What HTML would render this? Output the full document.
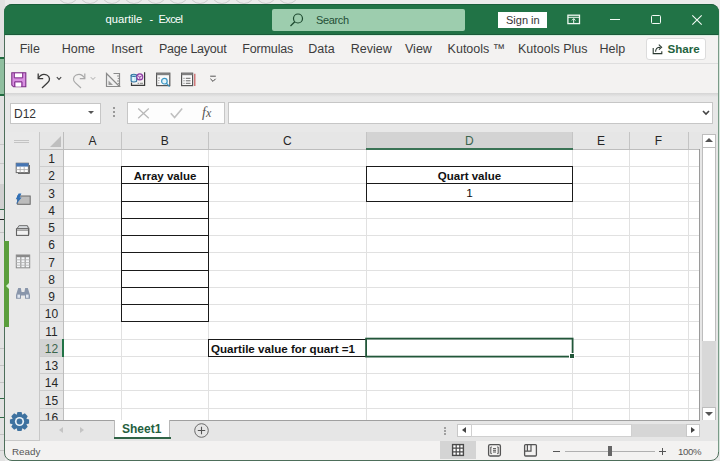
<!DOCTYPE html>
<html><head><meta charset="utf-8">
<style>
*{margin:0;padding:0;box-sizing:border-box}
html,body{width:720px;height:461px;overflow:hidden;background:#ebebeb;font-family:"Liberation Sans",sans-serif;position:relative;color:#262626}
.a{position:absolute}
.t{position:absolute;white-space:nowrap;line-height:1}
.gl{position:absolute;background:#dadada}
.hl{position:absolute;background:#c8c8c8}
.b{position:absolute;background:#1a1a1a}
.rn{position:absolute;left:40px;width:23px;text-align:center;font-size:12px;line-height:17px;color:#262626}
.cell{font-size:11.8px;color:#111}
.ch{position:absolute;top:132px;height:17px;text-align:center;font-size:12px;line-height:19px;color:#262626}
</style></head><body>

<svg class="a" style="left:0;top:0" width="720" height="4" viewBox="0 0 720 4"><circle cx="68" cy="-7" r="10.5" fill="none" stroke="#c4c4c4" stroke-width="0.8"/><circle cx="90" cy="-7" r="10.5" fill="none" stroke="#c4c4c4" stroke-width="0.8"/><circle cx="112" cy="-7" r="10.5" fill="none" stroke="#c4c4c4" stroke-width="0.8"/><circle cx="134" cy="-7" r="10.5" fill="none" stroke="#c4c4c4" stroke-width="0.8"/><circle cx="156" cy="-7" r="10.5" fill="none" stroke="#c4c4c4" stroke-width="0.8"/><circle cx="178" cy="-7" r="10.5" fill="none" stroke="#c4c4c4" stroke-width="0.8"/><circle cx="200" cy="-7" r="10.5" fill="none" stroke="#c4c4c4" stroke-width="0.8"/><circle cx="222" cy="-7" r="10.5" fill="none" stroke="#c4c4c4" stroke-width="0.8"/><circle cx="244" cy="-7" r="10.5" fill="none" stroke="#c4c4c4" stroke-width="0.8"/><circle cx="266" cy="-7" r="10.5" fill="none" stroke="#c4c4c4" stroke-width="0.8"/><circle cx="288" cy="-7" r="10.5" fill="none" stroke="#c4c4c4" stroke-width="0.8"/></svg>
<!-- background window strip on the left -->
<div class="a" style="left:0;top:0;width:5px;height:461px;background:#e2e2e2"></div>
<div class="a" style="left:0;top:57px;width:5px;height:39px;background:#8fbf9f;border-top:2px solid #1f6b3f;border-bottom:2px solid #1f6b3f"></div>

<div class="a" style="left:0;top:144px;width:5px;height:1px;background:#c8c8c8"></div>
<div class="a" style="left:0;top:163px;width:5px;height:1px;background:#c8c8c8"></div>
<div class="a" style="left:0;top:184px;width:5px;height:25px;background:#d0d0d0"></div>
<div class="a" style="left:0;top:209px;width:5px;height:1px;background:#2f6b45"></div>
<div class="a" style="left:0;top:219px;width:5px;height:1px;background:#222"></div>
<div class="a" style="left:0;top:232px;width:5px;height:1px;background:#c4c4c4"></div>
<div class="a" style="left:0;top:348px;width:5px;height:1px;background:#c4c4c4"></div>
<div class="a" style="left:0;top:365px;width:5px;height:1px;background:#c4c4c4"></div>
<div class="a" style="left:0;top:382px;width:5px;height:1px;background:#c4c4c4"></div>
<div class="a" style="left:0;top:398px;width:5px;height:1px;background:#2f6b45"></div>
<div class="a" style="left:0;top:417px;width:5px;height:1px;background:#2f6b45"></div>
<div class="a" style="left:0;top:434px;width:5px;height:1px;background:#c4c4c4"></div>
<div class="a" style="left:0;top:450px;width:5px;height:1px;background:#c4c4c4"></div>
<!-- window frame -->
<div class="a" style="left:4px;top:4px;width:715px;height:457px;border-radius:8px;background:#f3f2f1;border:1px solid #4d6e5a;overflow:hidden">
</div>

<div class="a" style="left:718px;top:30px;width:1px;height:422px;background:#7a9b88"></div>
<div class="a" style="left:719px;top:30px;width:1px;height:422px;background:#d9e7de"></div>
<!-- title bar -->
<div class="a" style="left:4px;top:4px;width:715px;height:31px;border-radius:8px 8px 0 0;background:#217346;border-top:1px solid #1a5e3a"></div>
<div class="a" style="left:5px;top:34px;width:713px;height:1px;background:#1b5a3a"></div>
<div class="a" style="left:5px;top:35px;width:713px;height:1px;background:#d8efe0"></div>
<div class="t" style="left:105.5px;top:14px;font-size:11.2px;color:#fff">quartile</div><div class="t" style="left:149.5px;top:14px;font-size:11px;color:#fff">-</div><div class="t" style="left:158.5px;top:14px;font-size:11px;letter-spacing:-0.6px;color:#fff">Excel</div>
<div class="a" style="left:272px;top:9px;width:193px;height:22px;background:#9dcdae;border-radius:2px"></div>
<svg class="a" style="left:288px;top:11px" width="18" height="18" viewBox="0 0 18 18"><circle cx="10" cy="7.5" r="4.5" fill="none" stroke="#1e4a30" stroke-width="1.2"/><path d="M6.8 10.7 L2.5 15" stroke="#1e4a30" stroke-width="1.3"/></svg>
<div class="t" style="left:316px;top:15px;font-size:11px;letter-spacing:-0.35px;color:#244f36">Search</div>
<div class="a" style="left:498px;top:12px;width:49px;height:16px;background:#fff"></div>
<div class="t" style="left:506px;top:15px;font-size:11px;color:#333">Sign in</div>
<!-- ribbon display icon -->
<svg class="a" style="left:566px;top:13px" width="16" height="13" viewBox="0 0 16 13"><rect x="1.9" y="2.2" width="11.6" height="8.4" fill="none" stroke="#eef8f1" stroke-width="1.3"/><path d="M2 4.3 H13.4" stroke="#eef8f1" stroke-width="1"/><path d="M7.7 10.5 V5.6 M5.9 7.4 L7.7 5.6 L9.5 7.4" fill="none" stroke="#eef8f1" stroke-width="1"/></svg>
<div class="a" style="left:610px;top:19px;width:10px;height:1px;background:#f4fbf6"></div>
<div class="a" style="left:651px;top:14.5px;width:10px;height:9.5px;border:1px solid #f4fbf6;border-radius:1.5px"></div>
<svg class="a" style="left:691px;top:14px" width="12" height="12" viewBox="0 0 12 12"><path d="M1.3 1.3 L10.7 10.7 M10.7 1.3 L1.3 10.7" stroke="#f4fbf6" stroke-width="1.1"/></svg>

<!-- menu bar -->
<div class="t" style="left:19.7px;top:43px;font-size:12.5px;color:#3c3c3c">File</div>
<div class="t" style="left:61.7px;top:43px;font-size:12.5px;color:#3c3c3c">Home</div>
<div class="t" style="left:111.3px;top:43px;font-size:12.5px;color:#3c3c3c">Insert</div>
<div class="t" style="left:159.0px;top:43px;font-size:12.5px;letter-spacing:-0.25px;color:#3c3c3c">Page Layout</div>
<div class="t" style="left:242.3px;top:43px;font-size:12.5px;letter-spacing:-0.15px;color:#3c3c3c">Formulas</div>
<div class="t" style="left:308.3px;top:43px;font-size:12.5px;color:#3c3c3c">Data</div>
<div class="t" style="left:350.7px;top:43px;font-size:12.5px;color:#3c3c3c">Review</div>
<div class="t" style="left:405.0px;top:43px;font-size:12.5px;color:#3c3c3c">View</div>
<div class="t" style="left:447.6px;top:43px;font-size:12.5px;color:#3c3c3c">Kutools ™</div>
<div class="t" style="left:518.0px;top:43px;font-size:12.5px;color:#3c3c3c">Kutools Plus</div>
<div class="t" style="left:599.6px;top:43px;font-size:12.5px;color:#3c3c3c">Help</div>
<div class="a" style="left:646px;top:38px;width:60px;height:22px;background:#fff;border:1px solid #dcdcdc;border-radius:3px"></div>
<svg class="a" style="left:652px;top:43px" width="12" height="12" viewBox="0 0 12 12"><path d="M1.2 5 V10.6 H9.8 V8.2" fill="none" stroke="#2b3a32" stroke-width="1.1"/><path d="M3.6 8.8 C3.6 5.6 5.6 4.2 8.2 4.2 M6.8 1.6 L9.6 4.2 L7 6.6" fill="none" stroke="#2b3a32" stroke-width="1.1"/></svg>
<div class="t" style="left:667.5px;top:43px;font-size:11.6px;font-weight:bold;color:#1f6340">Share</div>

<!-- QAT -->
<div class="a" style="left:5px;top:63px;width:713px;height:1px;background:#dedede"></div>
<div class="a" style="left:5px;top:93px;width:713px;height:39px;background:#e8e8e8"></div>
<div class="a" style="left:5px;top:93px;width:713px;height:4px;background:linear-gradient(#d4d4d4,#e8e8e8)"></div>

<!-- QAT icons -->
<svg class="a" style="left:10px;top:71px" width="18" height="18" viewBox="0 0 18 18">
<path d="M1.8 1.8 H15.8 V15.8 H3.5 L1.8 14.1 Z" fill="#d98fe2" stroke="#7b2e85" stroke-width="1.1"/>
<rect x="4.6" y="2.6" width="7.8" height="3.9" fill="#fff"/>
<path d="M4.3 1.8 V6.9 H12.7 V1.8" fill="none" stroke="#7b2e85" stroke-width="1"/>
<rect x="5.5" y="11.4" width="5.6" height="4.2" fill="#fff"/>
<path d="M4.7 15.8 V10.8 H12 V15.8" fill="none" stroke="#7b2e85" stroke-width="1"/>
</svg>
<svg class="a" style="left:35px;top:71px" width="18" height="18" viewBox="0 0 18 18">
<path d="M3.2 7.3 C5.5 3.6 9 2.8 11.8 4 C15.2 5.6 15.2 9.6 12.8 11.6 L7 17" fill="none" stroke="#3a3a3a" stroke-width="1.3"/>
<path d="M3.2 2.5 V7.6 H8.2" fill="none" stroke="#3a3a3a" stroke-width="1.3"/>
</svg>
<svg class="a" style="left:55px;top:75px" width="8" height="7" viewBox="0 0 8 7"><path d="M1.8 2.2 L4 4.5 L6.2 2.2" fill="none" stroke="#444" stroke-width="1.1"/></svg>
<svg class="a" style="left:70px;top:71px" width="18" height="18" viewBox="0 0 18 18">
<path d="M14.8 7.3 C12.5 3.6 9 2.8 6.2 4 C2.8 5.6 2.8 9.6 5.2 11.6 L11 17" fill="none" stroke="#a8a8a8" stroke-width="1.2"/>
<path d="M14.8 2.5 V7.6 H9.8" fill="none" stroke="#a8a8a8" stroke-width="1.2"/>
</svg>
<svg class="a" style="left:89px;top:75px" width="8" height="7" viewBox="0 0 8 7"><path d="M1.8 2.2 L4 4.5 L6.2 2.2" fill="none" stroke="#aaa" stroke-width="1"/></svg>
<svg class="a" style="left:104px;top:71px" width="18" height="18" viewBox="0 0 18 18">
<path d="M2.5 2.5 L15.5 15.5 H2.5 Z" fill="#f0f0f0" stroke="#8a8a8a" stroke-width="1.2"/>
<path d="M4.5 9.5 L9 14 H4.5 Z" fill="#9a9a9a"/>
<path d="M9.5 2.5 H15.5 V15.5" fill="none" stroke="#8a8a8a" stroke-width="1.2"/>
<path d="M13 5 H15.5 M13.8 7.5 H15.5 M13 10 H15.5 M13.8 12.5 H15.5" stroke="#8a8a8a" stroke-width="0.9"/>
</svg>
<svg class="a" style="left:129px;top:71px" width="18" height="18" viewBox="0 0 18 18">
<path d="M2.5 11.6 V14.4 H15.6 V1.3" fill="none" stroke="#3a3a3a" stroke-width="1.2"/>
<path d="M8.6 12.3 H10 M10.8 12.3 H14" stroke="#777" stroke-width="0.9"/>
<path d="M2.1 4.3 V9.8 C2.1 11.3 7.7 11.3 7.7 9.8 V4.3" fill="#c9ecf7" stroke="#2b6f9e" stroke-width="1.1"/>
<ellipse cx="4.9" cy="4.3" rx="2.8" ry="1.1" fill="#c9ecf7" stroke="#2b6f9e" stroke-width="1.1"/>
<path d="M4.2 6 V9.5" stroke="#ffffff" stroke-width="0.9"/>
<circle cx="10.8" cy="5.9" r="3" fill="#f1ddf3" stroke="#8d3aa3" stroke-width="1.1"/>
<path d="M8.6 4.7 L10.8 6 L13 4.7 M10.8 6 V8.6" fill="none" stroke="#8d3aa3" stroke-width="0.9"/>
</svg>
<svg class="a" style="left:154px;top:71px" width="18" height="18" viewBox="0 0 18 18">
<rect x="2.6" y="2.2" width="13.2" height="12.4" fill="#fafafa" stroke="#555" stroke-width="1.2"/>
<rect x="2.6" y="2.2" width="13.2" height="2" fill="#808080"/>
<path d="M4.3 7 H6 M4.3 9.5 H5.3 M4.3 12 H5.3" stroke="#777" stroke-width="0.8"/>
<circle cx="10.4" cy="10.2" r="2.8" fill="#e3f4fa" stroke="#3a96c4" stroke-width="1.2"/>
<path d="M12.4 12.3 L15.6 15.6" stroke="#3a96c4" stroke-width="1.3"/>
</svg>
<svg class="a" style="left:179px;top:71px" width="18" height="18" viewBox="0 0 18 18">
<rect x="2.6" y="2.2" width="11" height="12.4" fill="#fafafa" stroke="#555" stroke-width="1.2"/>
<rect x="2.6" y="2.2" width="11" height="2" fill="#808080"/>
<path d="M4.5 7.3 H5.5 M6.8 7.3 H11.5 M4.5 9.8 H5.5 M6.8 9.8 H11.5 M4.5 12.3 H5.5 M6.8 12.3 H11.5" stroke="#666" stroke-width="1"/>
<path d="M15.8 2.8 V15" stroke="#c85a5e" stroke-width="1.2"/>
</svg>
<svg class="a" style="left:207px;top:73px" width="12" height="12" viewBox="0 0 12 12"><path d="M3.2 3.2 H8.8" stroke="#444" stroke-width="0.9"/><path d="M3.4 5.8 L6 8.4 L8.6 5.8" fill="none" stroke="#444" stroke-width="1"/></svg>

<!-- formula bar -->
<div class="a" style="left:10px;top:103px;width:91px;height:21px;background:#fff;border:1px solid #c6c6c6"></div>
<div class="t" style="left:14px;top:108px;font-size:12px;color:#333">D12</div>
<div class="a" style="left:88px;top:111px;width:0;height:0;border-left:3px solid transparent;border-right:3px solid transparent;border-top:3px solid #555"></div>
<div class="a" style="left:113px;top:107px;width:2px;height:2px;background:#999"></div>
<div class="a" style="left:113px;top:111px;width:2px;height:2px;background:#999"></div>
<div class="a" style="left:113px;top:115px;width:2px;height:2px;background:#999"></div>
<div class="a" style="left:127px;top:102px;width:98px;height:22px;background:#fdfdfd;border:1px solid #c6c6c6"></div>
<svg class="a" style="left:136px;top:106px" width="15" height="15" viewBox="0 0 15 15"><path d="M2.2 2.6 L12.8 12.2 M12.8 2.6 L2.2 12.2" stroke="#b8b8b8" stroke-width="1.3"/></svg>
<svg class="a" style="left:169px;top:106px" width="15" height="15" viewBox="0 0 15 15"><path d="M1.8 7.2 L5.6 11.6 L13.2 2.6" fill="none" stroke="#c0c0c0" stroke-width="1.6"/></svg>
<div class="t" style="left:202px;top:106px;font-family:'Liberation Serif',serif;font-style:italic;font-size:14px;color:#555">f<span style="font-size:12px">x</span></div>
<div class="a" style="left:228px;top:102px;width:485px;height:22px;background:#fff;border:1px solid #c6c6c6"></div>

<svg class="a" style="left:701px;top:108px" width="10" height="9" viewBox="0 0 10 9"><path d="M2 3 L5 6 L8 3" fill="none" stroke="#444" stroke-width="1.6"/></svg>
<!-- left pane -->
<div class="a" style="left:5px;top:132px;width:35px;height:309px;background:#e9e9e9;border-bottom:1px solid #c8c8c8"></div>
<div class="a" style="left:39px;top:132px;width:1px;height:309px;background:#c8c8c8"></div>

<!-- left pane icons -->
<div class="a" style="left:14px;top:140px;width:15px;height:1px;background:#c4c4c4"></div>
<div class="a" style="left:14px;top:142px;width:15px;height:1px;background:#c4c4c4"></div>
<svg class="a" style="left:15px;top:162px" width="16" height="13" viewBox="0 0 16 13">
<path d="M3 11.5 H14.5 V3" fill="none" stroke="#6b6b6b" stroke-width="1"/>
<rect x="1.2" y="1.2" width="12.2" height="9.4" fill="#fff" stroke="#6b6b6b" stroke-width="1"/>
<rect x="1.2" y="1.2" width="12.2" height="3.4" fill="#4676b4"/>
<path d="M1.2 7.6 H13.4 M5.2 4.6 V10.6 M9.2 4.6 V10.6" stroke="#a8a8a8" stroke-width="0.8"/>
</svg>
<svg class="a" style="left:14px;top:193px" width="18" height="13" viewBox="0 0 18 13">
<rect x="3.6" y="3" width="12.6" height="8.3" fill="#bcbcbc" stroke="#6a6a6a" stroke-width="1"/>
<path d="M4.6 0.6 H7.4 L5.6 4.4 H7.6 L2 11.6 L3.8 6.2 H1.8 Z" fill="#2f6fb6"/>
</svg>
<svg class="a" style="left:15px;top:223px" width="17" height="14" viewBox="0 0 17 14">
<path d="M4 2.3 H12.5 L14.6 5.2 V11.2 L13.6 12.6 V7 L12.2 5.6 H1.6 Z" fill="#9a9a9a"/>
<path d="M4.2 2.6 H12.2 L13.6 5.6 H2 Z" fill="#d6d9dc" stroke="#707070" stroke-width="0.9"/>
<rect x="1.5" y="5.8" width="12" height="6.6" fill="#f2f2f2" stroke="#626262" stroke-width="1.1"/>
<path d="M2 7.4 H13" stroke="#9a9a9a" stroke-width="1"/>
</svg>
<svg class="a" style="left:15px;top:254px" width="16" height="15" viewBox="0 0 16 15">
<rect x="1.3" y="1" width="13.4" height="12.8" fill="#f4f6f8" stroke="#8a8a8a" stroke-width="1"/>
<rect x="1.3" y="1" width="13.4" height="2.2" fill="#8a8a8a"/>
<path d="M5.8 3 V13.8 M10.2 3 V13.8" stroke="#9a9a9a" stroke-width="1.2"/>
<path d="M1.3 5.8 H14.7 M1.3 8.6 H14.7 M1.3 11.2 H14.7" stroke="#b4b4b4" stroke-width="0.9"/>
</svg>
<svg class="a" style="left:15px;top:287px" width="16" height="13" viewBox="0 0 16 13">
<path d="M3.2 1 H5.8 L6.6 5 H9.4 L10.2 1 H12.8 L15 8 V11.8 H10 V8.6 H6 V11.8 H1 V8 Z" fill="#8996ab"/>
<rect x="2.4" y="7.6" width="2.6" height="3.2" fill="#dfe6f0"/>
<rect x="11" y="7.6" width="2.6" height="3.2" fill="#dfe6f0"/>
</svg>
<svg class="a" style="left:9px;top:411px" width="21" height="21" viewBox="0 0 21 21">
<path d="M17.34 7.69 L20.08 8.46 L20.08 12.54 L17.34 13.31 L17.33 13.35 L18.72 15.83 L15.83 18.72 L13.35 17.33 L13.31 17.34 L12.54 20.08 L8.46 20.08 L7.69 17.34 L7.65 17.33 L5.17 18.72 L2.28 15.83 L3.67 13.35 L3.66 13.31 L0.92 12.54 L0.92 8.46 L3.66 7.69 L3.67 7.65 L2.28 5.17 L5.17 2.28 L7.65 3.67 L7.69 3.66 L8.46 0.92 L12.54 0.92 L13.31 3.66 L13.35 3.67 L15.83 2.28 L18.72 5.17 L17.33 7.65 Z" fill="#3e72a0"/>
<circle cx="10.5" cy="10.5" r="4.6" fill="#e9f1f7"/>
<circle cx="10.5" cy="10.5" r="2.9" fill="#3e72a0"/>
</svg>
<!-- green side bar -->
<div class="a" style="left:4px;top:241px;width:5px;height:86px;background:#5a9e3c"></div>
<div class="a" style="left:6px;top:283px;width:0;height:0;border-top:3px solid transparent;border-bottom:3px solid transparent;border-right:3px solid #d8f0d0"></div>

<!-- grid -->
<div class="a" style="left:40px;top:132px;width:660px;height:17px;background:#e6e6e6"></div>
<div class="a" style="left:40px;top:149px;width:24px;height:272px;background:#e6e6e6"></div>
<div class="a" style="left:64px;top:149px;width:636px;height:272px;background:#fff"></div>

<div class="a" style="left:64px;top:166px;width:636px;height:1px;background:#e1e1e1"></div>
<div class="a" style="left:64px;top:183px;width:636px;height:1px;background:#e1e1e1"></div>
<div class="a" style="left:64px;top:201px;width:636px;height:1px;background:#e1e1e1"></div>
<div class="a" style="left:64px;top:218px;width:636px;height:1px;background:#e1e1e1"></div>
<div class="a" style="left:64px;top:235px;width:636px;height:1px;background:#e1e1e1"></div>
<div class="a" style="left:64px;top:252px;width:636px;height:1px;background:#e1e1e1"></div>
<div class="a" style="left:64px;top:270px;width:636px;height:1px;background:#e1e1e1"></div>
<div class="a" style="left:64px;top:287px;width:636px;height:1px;background:#e1e1e1"></div>
<div class="a" style="left:64px;top:304px;width:636px;height:1px;background:#e1e1e1"></div>
<div class="a" style="left:64px;top:321px;width:636px;height:1px;background:#e1e1e1"></div>
<div class="a" style="left:64px;top:339px;width:636px;height:1px;background:#e1e1e1"></div>
<div class="a" style="left:64px;top:356px;width:636px;height:1px;background:#e1e1e1"></div>
<div class="a" style="left:64px;top:373px;width:636px;height:1px;background:#e1e1e1"></div>
<div class="a" style="left:64px;top:390px;width:636px;height:1px;background:#e1e1e1"></div>
<div class="a" style="left:64px;top:408px;width:636px;height:1px;background:#e1e1e1"></div>
<div class="a" style="left:121px;top:149px;width:1px;height:271px;background:#e1e1e1"></div>
<div class="a" style="left:208px;top:149px;width:1px;height:271px;background:#e1e1e1"></div>
<div class="a" style="left:366px;top:149px;width:1px;height:271px;background:#e1e1e1"></div>
<div class="a" style="left:572px;top:149px;width:1px;height:271px;background:#e1e1e1"></div>
<div class="a" style="left:629px;top:149px;width:1px;height:271px;background:#e1e1e1"></div>
<div class="a" style="left:688px;top:149px;width:1px;height:271px;background:#e1e1e1"></div>
<div class="a" style="left:121px;top:132px;width:1px;height:17px;background:#c4c4c4"></div>
<div class="a" style="left:208px;top:132px;width:1px;height:17px;background:#c4c4c4"></div>
<div class="a" style="left:366px;top:132px;width:1px;height:17px;background:#c4c4c4"></div>
<div class="a" style="left:572px;top:132px;width:1px;height:17px;background:#c4c4c4"></div>
<div class="a" style="left:629px;top:132px;width:1px;height:17px;background:#c4c4c4"></div>
<div class="a" style="left:688px;top:132px;width:1px;height:17px;background:#c4c4c4"></div>
<div class="a" style="left:40px;top:149px;width:660px;height:1px;background:#bdbdbd"></div>
<div class="a" style="left:40px;top:166px;width:24px;height:1px;background:#cdcdcd"></div>
<div class="a" style="left:40px;top:183px;width:24px;height:1px;background:#cdcdcd"></div>
<div class="a" style="left:40px;top:201px;width:24px;height:1px;background:#cdcdcd"></div>
<div class="a" style="left:40px;top:218px;width:24px;height:1px;background:#cdcdcd"></div>
<div class="a" style="left:40px;top:235px;width:24px;height:1px;background:#cdcdcd"></div>
<div class="a" style="left:40px;top:252px;width:24px;height:1px;background:#cdcdcd"></div>
<div class="a" style="left:40px;top:270px;width:24px;height:1px;background:#cdcdcd"></div>
<div class="a" style="left:40px;top:287px;width:24px;height:1px;background:#cdcdcd"></div>
<div class="a" style="left:40px;top:304px;width:24px;height:1px;background:#cdcdcd"></div>
<div class="a" style="left:40px;top:321px;width:24px;height:1px;background:#cdcdcd"></div>
<div class="a" style="left:40px;top:339px;width:24px;height:1px;background:#cdcdcd"></div>
<div class="a" style="left:40px;top:356px;width:24px;height:1px;background:#cdcdcd"></div>
<div class="a" style="left:40px;top:373px;width:24px;height:1px;background:#cdcdcd"></div>
<div class="a" style="left:40px;top:390px;width:24px;height:1px;background:#cdcdcd"></div>
<div class="a" style="left:40px;top:408px;width:24px;height:1px;background:#cdcdcd"></div>
<div class="a" style="left:63px;top:132px;width:1px;height:288px;background:#bdbdbd"></div>
<div class="a" style="left:40px;top:339px;width:24px;height:17px;background:#d3d3d3"></div>
<div class="a" style="left:62px;top:339px;width:2px;height:18px;background:#217346"></div>
<div class="a" style="left:367px;top:132px;width:205px;height:17px;background:#d3d3d3"></div>
<div class="a" style="left:366px;top:148px;width:207px;height:2px;background:#3a7355"></div>
<div class="rn" style="top:150.5px;height:17px;line-height:17px;color:#262626">1</div>
<div class="rn" style="top:167.5px;height:17px;line-height:17px;color:#262626">2</div>
<div class="rn" style="top:184.5px;height:18px;line-height:18px;color:#262626">3</div>
<div class="rn" style="top:202.5px;height:17px;line-height:17px;color:#262626">4</div>
<div class="rn" style="top:219.5px;height:17px;line-height:17px;color:#262626">5</div>
<div class="rn" style="top:236.5px;height:17px;line-height:17px;color:#262626">6</div>
<div class="rn" style="top:253.5px;height:18px;line-height:18px;color:#262626">7</div>
<div class="rn" style="top:271.5px;height:17px;line-height:17px;color:#262626">8</div>
<div class="rn" style="top:288.5px;height:17px;line-height:17px;color:#262626">9</div>
<div class="rn" style="top:305.5px;height:17px;line-height:17px;color:#262626">10</div>
<div class="rn" style="top:322.5px;height:18px;line-height:18px;color:#262626">11</div>
<div class="rn" style="top:340.5px;height:17px;line-height:17px;color:#3b654c">12</div>
<div class="rn" style="top:357.5px;height:17px;line-height:17px;color:#262626">13</div>
<div class="rn" style="top:374.5px;height:17px;line-height:17px;color:#262626">14</div>
<div class="rn" style="top:391.5px;height:18px;line-height:18px;color:#262626">15</div>
<div class="rn" style="top:409.5px;height:17px;line-height:17px;color:#262626">16</div>
<div class="ch" style="left:63.5px;width:57.8px;color:#262626">A</div>
<div class="ch" style="left:121.3px;width:87.10000000000001px;color:#262626">B</div>
<div class="ch" style="left:208.4px;width:157.70000000000002px;color:#262626">C</div>
<div class="ch" style="left:366.1px;width:206.29999999999995px;color:#3b654c">D</div>
<div class="ch" style="left:572.4px;width:57.0px;color:#262626">E</div>
<div class="ch" style="left:629.4px;width:58.200000000000045px;color:#262626">F</div>
<div class="a" style="left:121px;top:166px;width:88px;height:1px;background:#1a1a1a"></div>
<div class="a" style="left:121px;top:183px;width:88px;height:1px;background:#1a1a1a"></div>
<div class="a" style="left:121px;top:201px;width:88px;height:1px;background:#1a1a1a"></div>
<div class="a" style="left:121px;top:218px;width:88px;height:1px;background:#1a1a1a"></div>
<div class="a" style="left:121px;top:235px;width:88px;height:1px;background:#1a1a1a"></div>
<div class="a" style="left:121px;top:252px;width:88px;height:1px;background:#1a1a1a"></div>
<div class="a" style="left:121px;top:270px;width:88px;height:1px;background:#1a1a1a"></div>
<div class="a" style="left:121px;top:287px;width:88px;height:1px;background:#1a1a1a"></div>
<div class="a" style="left:121px;top:304px;width:88px;height:1px;background:#1a1a1a"></div>
<div class="a" style="left:121px;top:321px;width:88px;height:1px;background:#1a1a1a"></div>
<div class="a" style="left:121px;top:166px;width:1px;height:156px;background:#1a1a1a"></div>
<div class="a" style="left:208px;top:166px;width:1px;height:156px;background:#1a1a1a"></div>
<div class="a" style="left:366px;top:166px;width:207px;height:1px;background:#1a1a1a"></div>
<div class="a" style="left:366px;top:183px;width:207px;height:1px;background:#1a1a1a"></div>
<div class="a" style="left:366px;top:201px;width:207px;height:1px;background:#1a1a1a"></div>
<div class="a" style="left:366px;top:166px;width:1px;height:36px;background:#1a1a1a"></div>
<div class="a" style="left:572px;top:166px;width:1px;height:36px;background:#1a1a1a"></div>
<div class="a" style="left:208px;top:339px;width:159px;height:1px;background:#1a1a1a"></div>
<div class="a" style="left:208px;top:356px;width:159px;height:1px;background:#1a1a1a"></div>
<div class="a" style="left:208px;top:339px;width:1px;height:18px;background:#1a1a1a"></div>
<svg class="a" style="left:364px;top:336px" width="214" height="24" viewBox="0 0 214 24"><rect x="2.1" y="2.6" width="206.5" height="18" fill="none" stroke="#22573a" stroke-width="1.8"/></svg>
<div class="a" style="left:569px;top:353px;width:6px;height:6px;background:#22573a;border:1px solid #fff"></div>
<div class="a cell" style="left:121px;top:168px;width:88px;height:17px;line-height:17px;text-align:center;font-weight:bold;font-size:11.5px">Array value</div>
<div class="a cell" style="left:366px;top:168px;width:207px;height:17px;line-height:17px;text-align:center;font-weight:bold;font-size:11.5px">Quart value</div>
<div class="a cell" style="left:366px;top:184px;width:207px;height:18px;line-height:18px;text-align:center;font-weight:normal;font-size:11.8px">1</div>
<div class="a cell" style="left:211px;top:340px;height:17px;line-height:17px;font-weight:bold;white-space:nowrap;font-size:11.6px">Quartile value for quart =1</div>
<svg class="a" style="left:49px;top:135px" width="13" height="13" viewBox="0 0 13 13"><path d="M12 1 V12 H1 Z" fill="#bfbfbf"/></svg>


<!-- vertical scrollbar -->
<div class="a" style="left:699px;top:149px;width:1px;height:272px;background:#9a9a9a"></div>
<div class="a" style="left:700px;top:132px;width:18px;height:289px;background:#e6e6e6"></div>
<div class="a" style="left:702px;top:134px;width:14px;height:14px;background:#fff;border:1px solid #bdbdbd"></div>
<div class="a" style="left:705px;top:138px;width:0;height:0;border-left:4px solid transparent;border-right:4px solid transparent;border-bottom:4px solid #555"></div>
<div class="a" style="left:702px;top:147px;width:14px;height:195px;background:#fff;border:1px solid #bdbdbd"></div>
<div class="a" style="left:702px;top:341px;width:14px;height:67px;background:#d8d8d8"></div>
<div class="a" style="left:702px;top:407px;width:14px;height:14px;background:#fff;border:1px solid #bdbdbd"></div>
<div class="a" style="left:705px;top:412px;width:0;height:0;border-left:4px solid transparent;border-right:4px solid transparent;border-top:4px solid #555"></div>

<!-- sheet tab bar -->
<div class="a" style="left:40px;top:420px;width:678px;height:21px;background:#e6e6e6"></div>
<div class="a" style="left:40px;top:420px;width:660px;height:1px;background:#a0a0a0"></div>
<div class="a" style="left:59px;top:427px;width:0;height:0;border-top:3.5px solid transparent;border-bottom:3.5px solid transparent;border-right:4px solid #c4c4c4"></div>
<div class="a" style="left:80px;top:427px;width:0;height:0;border-top:3.5px solid transparent;border-bottom:3.5px solid transparent;border-left:4px solid #c4c4c4"></div>
<div class="a" style="left:114px;top:420px;width:56px;height:19px;background:#fff;border-left:1px solid #b8b8b8;border-right:1px solid #b8b8b8"></div>
<div class="a" style="left:114px;top:437px;width:57px;height:2px;background:#2f6346"></div>
<div class="t" style="left:122px;top:423px;font-size:12px;font-weight:bold;color:#255f40">Sheet1</div>
<svg class="a" style="left:193px;top:422px" width="17" height="17" viewBox="0 0 17 17"><circle cx="8.5" cy="8.5" r="6.8" fill="none" stroke="#6a6a6a" stroke-width="1"/><path d="M8.5 4.8 V12.2 M4.8 8.5 H12.2" stroke="#555" stroke-width="1.1"/></svg>
<div class="a" style="left:444px;top:427px;width:2px;height:2px;background:#a0a0a0"></div>
<div class="a" style="left:444px;top:430px;width:2px;height:2px;background:#a0a0a0"></div>
<div class="a" style="left:444px;top:433px;width:2px;height:2px;background:#a0a0a0"></div>
<div class="a" style="left:457px;top:424px;width:15px;height:13px;background:#fff;border:1px solid #c8c8c8"></div>
<div class="a" style="left:462px;top:427px;width:0;height:0;border-top:3.5px solid transparent;border-bottom:3.5px solid transparent;border-right:4px solid #444"></div>
<div class="a" style="left:471px;top:424px;width:161px;height:13px;background:#fff;border:1px solid #d0d0d0"></div>
<div class="a" style="left:632px;top:424px;width:54px;height:13px;background:#d6d6d6"></div>
<div class="a" style="left:686px;top:424px;width:14px;height:13px;background:#fff;border:1px solid #c8c8c8"></div>
<div class="a" style="left:691px;top:427px;width:0;height:0;border-top:3.5px solid transparent;border-bottom:3.5px solid transparent;border-left:4px solid #444"></div>

<!-- status bar -->
<div class="a" style="left:440px;top:441px;width:36px;height:18px;background:#d4d4d4"></div>
<svg class="a" style="left:451px;top:443px" width="14" height="14" viewBox="0 0 14 14"><rect x="1.6" y="1.6" width="10.8" height="10.8" fill="#fff" stroke="#4a4a4a" stroke-width="1.4"/><path d="M1.6 5.2 H12.4 M1.6 8.8 H12.4 M5.2 1.6 V12.4 M8.8 1.6 V12.4" stroke="#4a4a4a" stroke-width="1.2"/></svg>
<svg class="a" style="left:487px;top:443px" width="15" height="15" viewBox="0 0 15 15"><rect x="1.6" y="1.6" width="11.8" height="11.4" rx="1.5" fill="none" stroke="#555" stroke-width="1.3"/><path d="M4.8 4 H3.8 V10.6 H4.8 M10.2 4 H11.2 V10.6 H10.2 M6 5.6 H9 M6 7.3 H9 M6 9 H9" fill="none" stroke="#555" stroke-width="1"/></svg>
<svg class="a" style="left:523px;top:443px" width="15" height="15" viewBox="0 0 15 15"><rect x="1.6" y="1.6" width="11.8" height="11.4" rx="1" fill="none" stroke="#555" stroke-width="1.3"/><path d="M1.6 8.2 H8 V1.6 M4.4 1.6 V8.2" fill="none" stroke="#555" stroke-width="1.2"/></svg>
<div class="a" style="left:553px;top:451px;width:7px;height:1px;background:#555"></div>
<div class="a" style="left:565px;top:451px;width:90px;height:1px;background:#b0b0b0"></div>
<div class="a" style="left:608px;top:446px;width:4px;height:10px;background:#666"></div>
<div class="a" style="left:659px;top:451px;width:7px;height:1px;background:#555"></div>
<div class="a" style="left:662px;top:448px;width:1px;height:7px;background:#555"></div>
<div class="t" style="left:678px;top:446.5px;font-size:9.6px;letter-spacing:-0.35px;color:#555">100%</div>

<!-- status bar -->
<div class="t" style="left:12px;top:447px;font-size:9.8px;color:#555">Ready</div>

</body></html>
